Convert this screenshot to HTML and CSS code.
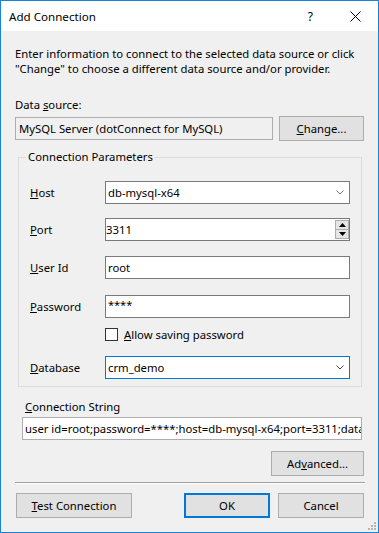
FILE: index.html
```html
<!DOCTYPE html>
<html>
<head>
<meta charset="utf-8">
<link rel="stylesheet" href="styles.css">
</head>
<body>
<div class="window">
  <div class="titlebar">
    <span class="title">Add Connection</span>
    <span class="help">?</span>
    <svg class="close" width="11" height="11" viewBox="0 0 11 11"><path d="M0.5 0.5 L10.5 10.5 M10.5 0.5 L0.5 10.5" stroke="#000" stroke-width="1" fill="none"/></svg>
  </div>
  <div class="body">
    <p class="intro">Enter information to connect to the selected data source or click<br>"Change" to choose a different data source and/or provider.</p>
    <div class="ds-label">Data <u>s</u>ource:</div>
    <div class="ds-row">
      <div class="field readonly">MySQL Server (dotConnect for MySQL)</div>
      <button class="btn change"><u>C</u>hange...</button>
    </div>
    <fieldset class="group">
      <legend>Connection Parameters</legend>
      <div class="row r-host">
        <label class="lbl"><u>H</u>ost</label>
        <div class="field combo"><span class="val">db-mysql-x64</span><svg class="chev" width="8" height="5" viewBox="0 0 8 5"><path d="M0.5 0.5 L4 4 L7.5 0.5" stroke="#707070" fill="none"/></svg></div>
      </div>
      <div class="row r-port">
        <label class="lbl"><u>P</u>ort</label>
        <div class="field spin"><span class="val">3311</span>
          <div class="spinner">
            <div class="sb"><svg width="7" height="4" viewBox="0 0 7 4"><path d="M3.5 0 L7 4 L0 4 Z" fill="#000"/></svg></div>
            <div class="sb"><svg width="7" height="4" viewBox="0 0 7 4"><path d="M0 0 L7 0 L3.5 4 Z" fill="#000"/></svg></div>
          </div>
        </div>
      </div>
      <div class="row r-user">
        <label class="lbl"><u>U</u>ser Id</label>
        <div class="field"><span class="val">root</span></div>
      </div>
      <div class="row r-pass">
        <label class="lbl"><u>P</u>assword</label>
        <div class="field"><span class="val pw">****</span></div>
      </div>
      <div class="row r-check">
        <span class="lbl"></span>
        <span class="checkbox"></span>
        <span class="check-label"><u>A</u>llow saving password</span>
      </div>
      <div class="row r-db">
        <label class="lbl"><u>D</u>atabase</label>
        <div class="field combo focused"><span class="val">crm_demo</span><svg class="chev" width="8" height="5" viewBox="0 0 8 5"><path d="M0.5 0.5 L4 4 L7.5 0.5" stroke="#444" fill="none"/></svg></div>
      </div>
    </fieldset>
    <div class="cs-label"><u>C</u>onnection String</div>
    <div class="field cs-field"><span class="val">user id=root;password=****;host=db-mysql-x64;port=3311;database=crm_demo</span></div>
    <div class="adv-row"><button class="btn adv">Ad<u>v</u>anced...</button></div>
    <div class="sep"></div>
    <div class="buttons">
      <button class="btn test"><u>T</u>est Connection</button>
      <span class="spacer"></span>
      <button class="btn ok default">OK</button>
      <button class="btn cancel">Cancel</button>
    </div>
  </div>
  <svg class="grip" width="8" height="8" viewBox="0 0 8 8">
    <rect x="6" y="0" width="2" height="2" fill="#b5b5b5"/>
    <rect x="3" y="3" width="2" height="2" fill="#b5b5b5"/>
    <rect x="6" y="3" width="2" height="2" fill="#b5b5b5"/>
    <rect x="0" y="6" width="2" height="2" fill="#b5b5b5"/>
    <rect x="3" y="6" width="2" height="2" fill="#b5b5b5"/>
    <rect x="6" y="6" width="2" height="2" fill="#b5b5b5"/>
  </svg>
</div>
</body>
</html>
```
FILE: styles.css
```css
* { box-sizing: border-box; }
html, body { margin: 0; padding: 0; }
body {
  font-family: "Noto Sans", "Open Sans", sans-serif;
  font-size: 11.3px;
  color: #000;
  background: #f0f0f0;
}
.window {
  position: relative;
  width: 379px;
  height: 533px;
  border: 1px solid #1883d7;
  background: #f0f0f0;
  display: flex;
  flex-direction: column;
}
.titlebar {
  height: 30px;
  background: #fff;
  display: flex;
  align-items: center;
  flex: none;
}
.title {
  margin-left: 8px;
  font-size: 11.6px;
  flex: 1;
}
.help {
  font-size: 12px;
  margin-right: 37px;
}
.close { margin-right: 17px; }
.body {
  padding: 0 14px;
  display: flex;
  flex-direction: column;
}
.intro {
  margin: 15px 0 0;
  line-height: 15px;
  height: 30px;
  white-space: nowrap;
}
.ds-label {
  margin-top: 21px;
  line-height: 15px;
  height: 15px;
}
.ds-row {
  margin-top: 4px;
  display: flex;
  align-items: center;
  height: 25px;
}
.field {
  height: 23px;
  border: 1px solid #7a7a7a;
  background: #fff;
  display: flex;
  align-items: center;
  padding: 0 2px;
  white-space: nowrap;
  overflow: hidden;
  flex: none;
}
.field.readonly {
  width: 258px;
  background: #f0f0f0;
  border-color: #adadad;
  padding-left: 3px;
}
.btn {
  font: inherit;
  color: #000;
  height: 25px;
  background: #e1e1e1;
  border: 1px solid #adadad;
  padding: 0;
  margin: 0;
  line-height: 15px;
  flex: none;
}
.change {
  margin-left: auto;
  width: 85px;
}
.group {
  margin: 8px 2px 0 3px;
  padding: 0 0 7px 11px;
  border: 1px solid #dcdcdc;
  min-width: 0;
}
.group legend {
  margin-left: -4px;
  padding: 0 2px;
  line-height: 16px;
}
.row {
  display: flex;
  align-items: center;
}
.lbl {
  width: 75px;
  flex: none;
}
.row .field { width: 245px; }
.r-host { margin-top: 16px; }
.r-port { margin-top: 14px; }
.r-user { margin-top: 15px; }
.r-pass { margin-top: 16px; }
.r-check { margin-top: 10px; height: 13px; }
.r-db { margin-top: 15px; }
.combo .val { flex: 1; }
.chev { margin-right: 3px; }
.field.focused { border-color: #0078d7; }
.spin { padding-left: 0; padding-right: 0; }
.spin .val { flex: 1; }
.spinner {
  display: flex;
  flex-direction: column;
  width: 14px;
  height: 19px;
}
.sb {
  flex: 1;
  background: #e6e6e6;
  border: 1px solid #adadad;
  display: flex;
  align-items: center;
  justify-content: center;
}
.sb + .sb { border-top: none; }
.checkbox {
  width: 13px;
  height: 13px;
  border: 1px solid #333;
  background: #fff;
  flex: none;
}
.check-label { margin-left: 6px; }
.pw { font-size: 11px; position: relative; top: -2px; }
.cs-label {
  margin-top: 12px;
  margin-left: 10px;
  line-height: 15px;
}
.cs-field {
  margin-top: 3px;
  margin-left: 7px;
  width: 340px;
  border-color: #adadad;
  padding-left: 2px;
}
.adv-row {
  margin-top: 11px;
  display: flex;
  justify-content: flex-end;
}
.adv { width: 93px; }
.sep {
  margin-top: 6px;
  margin-right: -1px;
  height: 2px;
  border-top: 1px solid #a0a0a0;
  border-bottom: 1px solid #fff;
}
.buttons {
  margin-top: 9px;
  display: flex;
}
.test { width: 116px; margin-left: 1px; }
.spacer { flex: 1; }
.ok { width: 86px; }
.ok.default { border: 2px solid #0078d7; }
.cancel { width: 86px; margin-left: 8px; }
.grip {
  position: absolute;
  right: 2px;
  bottom: 2px;
}
```
